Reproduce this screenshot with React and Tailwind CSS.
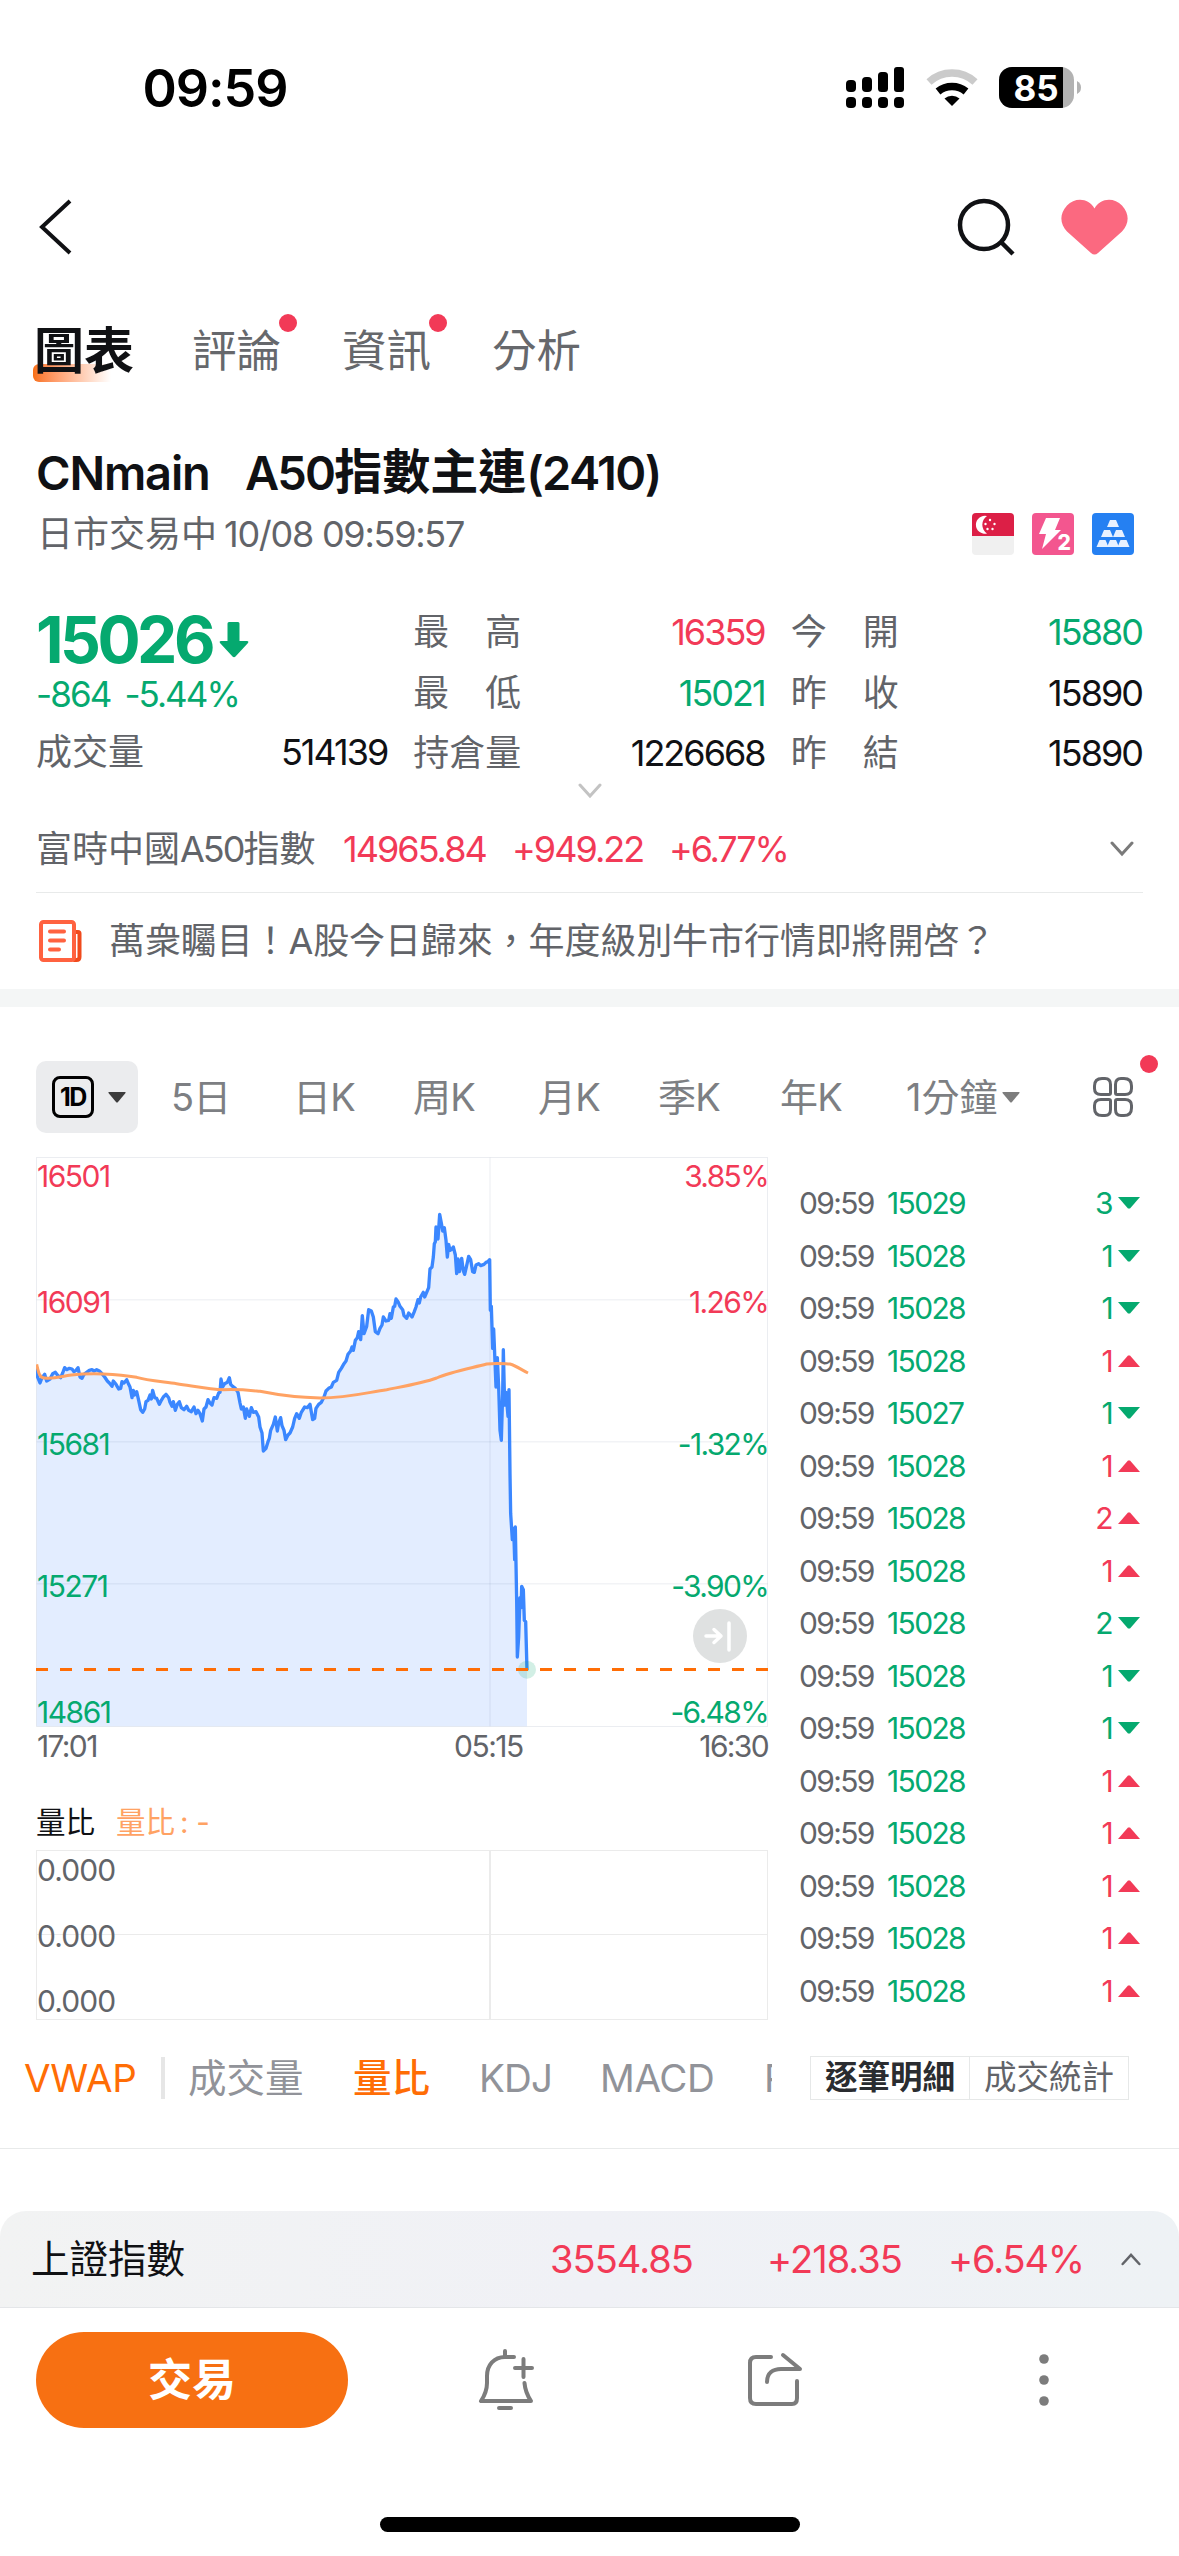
const UP = "text-[#f23a57]";
const DOWN = "text-[#05a96f]";

const tabs = [
  { label: "圖表", active: true },
  { label: "評論", dot: true },
  { label: "資訊", dot: true },
  { label: "分析" },
];

const stats = [
  [
    { label: ["最", "高"], value: "16359", color: UP },
    { label: ["最", "低"], value: "15021", color: DOWN },
    { label: ["持", "倉", "量"], value: "1226668", color: "text-[#101114]" },
  ],
  [
    { label: ["今", "開"], value: "15880", color: DOWN },
    { label: ["昨", "收"], value: "15890", color: "text-[#101114]" },
    { label: ["昨", "結"], value: "15890", color: "text-[#101114]" },
  ],
];

const periods = [
  { label: "5日", width: "w-[122px]" },
  { label: "日K", width: "w-[120px]" },
  { label: "周K", width: "w-[125px]" },
  { label: "月K", width: "w-[120px]" },
  { label: "季K", width: "w-[122px]" },
  { label: "年K", width: "w-[125px]" },
];

const yLabels = [
  { price: "16501", pct: "3.85%", color: UP, top: "top-[4px]" },
  { price: "16091", pct: "1.26%", color: UP, top: "top-[130px]" },
  { price: "15681", pct: "-1.32%", color: DOWN, top: "top-[272px]" },
  { price: "15271", pct: "-3.90%", color: DOWN, top: "top-[414px]" },
  { price: "14861", pct: "-6.48%", color: DOWN, top: "top-[540px]" },
];

const trades = [
  [15029, 3, "down"],
  [15028, 1, "down"],
  [15028, 1, "down"],
  [15028, 1, "up"],
  [15027, 1, "down"],
  [15028, 1, "up"],
  [15028, 2, "up"],
  [15028, 1, "up"],
  [15028, 2, "down"],
  [15028, 1, "down"],
  [15028, 1, "down"],
  [15028, 1, "up"],
  [15028, 1, "up"],
  [15028, 1, "up"],
  [15028, 1, "up"],
  [15028, 1, "up"],
];

// price path, 3 units per screen pixel
const priceLine =
  "20,500 22,528 30,548 36,532 44,522 50,542 60,536 68,520 76,516 84,526 92,532 98,518 104,502 110,508 118,504 126,506 132,514 138,510 144,502 150,530 156,534 162,522 170,516 178,510 186,508 192,512 200,508 208,512 216,520 224,530 232,542 238,548 246,558 250,542 258,552 266,566 272,564 276,544 282,548 290,538 296,552 300,560 306,592 310,570 314,584 320,574 326,600 332,628 338,636 344,626 348,604 354,600 360,584 364,596 368,570 374,592 380,594 388,612 394,600 400,590 408,582 416,592 420,606 426,618 430,604 436,630 442,612 448,604 454,622 462,628 470,618 476,630 484,634 492,620 498,640 504,630 510,640 517,662 522,626 528,620 534,598 540,608 546,614 552,592 560,594 566,578 570,576 573,536 578,560 584,550 592,546 598,532 602,552 608,558 616,564 624,576 630,608 634,626 640,620 646,654 650,626 658,648 664,622 670,636 678,634 686,650 690,680 696,698 700,752 708,744 714,724 718,714 722,690 730,672 736,650 742,692 746,668 752,652 756,676 762,690 767,718 774,704 780,698 788,680 794,654 800,640 808,654 814,636 824,620 832,622 840,612 848,658 854,654 858,624 866,612 874,606 882,590 888,572 896,564 904,560 910,546 920,540 926,516 934,504 942,490 948,482 954,462 962,452 966,440 970,450 976,420 982,412 986,394 992,418 997,346 1002,400 1010,378 1016,328 1024,332 1030,350 1036,394 1044,400 1050,384 1056,374 1060,350 1068,362 1076,360 1080,340 1084,354 1090,320 1094,318 1098,296 1104,304 1110,318 1118,328 1122,346 1130,354 1136,338 1146,350 1152,336 1158,320 1164,298 1168,308 1172,290 1180,276 1184,290 1190,276 1196,262 1200,206 1206,200 1210,170 1213,130 1216,124 1218,80 1224,116 1229,42 1234,68 1238,92 1243,82 1248,120 1252,170 1256,132 1260,150 1266,146 1270,140 1276,164 1280,220 1284,176 1288,214 1295,174 1300,212 1304,222 1310,196 1316,168 1322,178 1328,214 1333,216 1338,194 1346,190 1352,196 1362,192 1368,186 1374,184 1379,178 1381,330 1384,318 1388,444 1391,386 1394,460 1398,560 1402,472 1406,560 1410,690 1414,720 1418,580 1420,448 1424,614 1428,576 1434,648 1437,568 1440,820 1442,940 1447,1018 1451,984 1454,1078 1456,980 1460,1200 1462,1370 1466,1310 1470,1192 1473,1222 1475,1158 1480,1168 1483,1260 1487,1264 1491,1410";

const vwapLine =
  "M20,492 C26,520 30,534 44,533 C74,536 94,528 124,524 C160,520 190,520 220,521 C260,523 290,526 320,531 C350,540 400,544 440,550 C490,557 540,568 580,568 C630,566 660,570 690,573 C740,583 800,592 870,593 C950,593 1010,577 1070,568 C1120,558 1180,548 1220,533 C1260,515 1320,504 1370,491 C1400,487 1420,490 1440,491 C1460,497 1475,509 1494,518";

function Num({ className = "", track = "tracking-[-0.055em]", children }) {
  return <span className={`${track} ${className}`}>{children}</span>;
}

function Chevron({ className, up = false, w = 24 }) {
  return (
    <svg className={className} width={w} height="16" viewBox="0 0 24 16" fill="none" stroke="currentColor" strokeWidth="3" strokeLinecap="round">
      <path d={up ? "M2 14 12 3l10 11" : "M2 2l10 11L22 2"} />
    </svg>
  );
}

function StatusBar() {
  return (
    <div className="flex h-[176px] items-center justify-between pr-[98px] pl-[140px]">
      <span className="w-[150px] pt-[2px] text-center text-[52px] leading-none font-semibold tracking-[-0.02em] text-black">09:59</span>
      <svg width="236" height="42" viewBox="0 0 236 42">
        <g fill="#000">
          <rect x="1" y="13" width="10" height="12" rx="4" />
          <rect x="17" y="10" width="10" height="15" rx="4" />
          <rect x="33" y="5" width="10" height="20" rx="3.5" />
          <rect x="49" y="0" width="10" height="25" rx="3" />
          <rect x="1" y="30" width="10" height="11" rx="4" />
          <rect x="17" y="30" width="10" height="11" rx="4" />
          <rect x="33" y="30" width="10" height="11" rx="4" />
          <rect x="49" y="30" width="10" height="11" rx="4" />
        </g>
        <path d="M84 15a34 34 0 0 1 46 0" fill="none" stroke="#cbcbcb" strokeWidth="7.5" />
        <path d="M93 24.500a22 22 0 0 1 28 0" fill="none" stroke="#000" strokeWidth="7.500" />
        <path d="M99.500 31.500a12 12 0 0 1 15 0L107 39z" fill="#000" />
        <clipPath id="battery">
          <rect x="154" y="0" width="75" height="41" rx="13" />
        </clipPath>
        <g clipPath="url(#battery)">
          <rect x="154" width="75" height="41" fill="#b2b2b2" />
          <rect x="154" width="64" height="41" fill="#000" />
        </g>
        <path d="M232 14v13q4-2 4-6.500t-4-6.500z" fill="#b2b2b2" />
        <text x="191" y="33.500" textAnchor="middle" fill="#fff" fontSize="35" fontWeight="700" fontFamily="Inter, sans-serif">85</text>
      </svg>
    </div>
  );
}

function NavBar() {
  return (
    <div className="flex h-[102px] items-center justify-between pr-[51px] pl-[37px]">
      <svg width="36" height="56" viewBox="0 0 36 56" fill="none" stroke="#101114" strokeWidth="4">
        <path d="M33 2 5 28l28 26" />
      </svg>
      <div className="flex items-center gap-[46px]">
        <svg width="58" height="60" viewBox="0 0 58 60" fill="none" stroke="#101114" strokeWidth="4.500">
          <circle cx="27" cy="28" r="24" />
          <path d="m44 45 12 12" />
        </svg>
        <svg width="67" height="56" viewBox="0 0 67 56" fill="#fb6980">
          <path d="M33.500 9.500C28-1 14-2 6 6.500c-8 8.500-7 19 0 26L30 54q3.500 3 7 0l24-21.500c7-7 8-17.500 0-26C53-2 39-1 33.500 9.500z" />
        </svg>
      </div>
    </div>
  );
}

function Tabs() {
  return (
    <div className="flex h-[145px] items-center pl-[34px]">
      {tabs.map((t) =>
        t.active ? (
          <div key={t.label} className="relative w-[158px]">
            <span className="absolute -left-[1px] top-[41px] h-[18px] w-[78px] rounded-l-md bg-linear-to-r from-[#f77012] to-white" />
            <span className="relative text-[50px] leading-[56px] font-bold text-[#101114]">{t.label}</span>
          </div>
        ) : (
          <div key={t.label} className="relative w-[150px] text-[44.5px] leading-[56px] text-[#66686c]">
            {t.label}
            {t.dot && <span className="absolute -top-[9px] left-[87px] size-[18px] rounded-full bg-[#f23a57]" />}
          </div>
        )
      )}
    </div>
  );
}

function Badges() {
  return (
    <div className="flex gap-[18px]">
      <svg width="42" height="42" viewBox="0 0 42 42">
        <rect width="42" height="42" rx="4" fill="#f0f0f0" />
        <path d="M4 0h34a4 4 0 0 1 4 4v19H0V4a4 4 0 0 1 4-4z" fill="#dc1f46" />
        <path d="M15 3a9 9 0 1 0 0 17.500 10.500 10.500 0 0 1 0-17.500z" fill="#fff" />
        <g fill="#fff">
          <circle cx="18" cy="7" r="1.200" />
          <circle cx="13.500" cy="11" r="1.200" />
          <circle cx="22.500" cy="11" r="1.200" />
          <circle cx="15.500" cy="16" r="1.200" />
          <circle cx="20.500" cy="16" r="1.200" />
        </g>
      </svg>
      <svg width="42" height="42" viewBox="0 0 42 42">
        <rect width="42" height="42" rx="4" fill="#f3568f" />
        <path d="M14 5h14l-5 12h6L10 36l4-15H7z" fill="#fff" />
        <text x="25.500" y="37" fill="#fff" fontSize="21" fontWeight="800" fontFamily="Inter, sans-serif">2</text>
      </svg>
      <svg width="42" height="42" viewBox="0 0 42 42">
        <rect width="42" height="42" rx="4" fill="#2580f2" />
        <g fill="#e8f1ff">
          <path d="M18 7h6l3 7H15z" />
          <path d="M12 17h6l3 7H9z" />
          <path d="M24 17h6l3 7H21z" />
          <path d="M7.500 27h6l3 7H4.500z" />
          <path d="M18 27h6l3 7H15z" />
          <path d="M28.500 27h6l3 7H25.500z" />
        </g>
      </svg>
    </div>
  );
}

function Header() {
  return (
    <div className="px-9">
      <div className="flex h-[60px] items-center text-[48px] leading-none font-semibold text-[#101114]">
        <Num className="w-[209px] text-[47px]" track="tracking-[-0.025em]">CNmain</Num>
        <Num className="text-[47px]" track="tracking-[-0.04em]">A50</Num>
        <span className="font-bold">指數主連</span>
        <Num className="text-[47px]" track="tracking-[-0.035em]">(2410)</Num>
      </div>
      <div className="flex h-[64px] items-center justify-between pr-[9px] text-[36px] leading-none text-[#626469]">
        <span className="pl-[1px]">
          日市交易中<Num className="ml-[7px]" track="tracking-[-0.035em]">10/08 09:59:57</Num>
        </span>
        <Badges />
      </div>
    </div>
  );
}

function Quote() {
  return (
    <div className="grid h-[182px] grid-cols-3 gap-x-[26px] pr-[37px] pl-9 text-[36px] leading-none">
      <div className="flex flex-col">
        <div className={`flex h-[72px] items-center gap-[7px] pt-[3px] ${DOWN}`}>
          <Num className="text-[64px] font-bold">15026</Num>
          <svg width="30" height="36" viewBox="0 0 30 36" fill="currentColor">
            <path d="M10 0h9q1.500 0 1.500 1.500V19H28q2 0 1 2L16.500 34.500q-1.500 1.500-3 0L1 21q-1-2 1-2h6.500V1.500Q8.500 0 10 0z" />
          </svg>
        </div>
        <div className={`flex h-[41px] items-center gap-[14px] text-[35px] ${DOWN}`}>
          <Num>-864</Num>
          <Num>-5.44%</Num>
        </div>
        <div className="flex h-[68px] items-center justify-between pt-[5px]">
          <span className="text-[#626469]">成交量</span>
          <Num className="text-[#101114]">514139</Num>
        </div>
      </div>
      {stats.map((col, i) => (
        <div key={i} className="flex flex-col">
          {col.map((s) => (
            <div key={s.label.join("")} className="flex h-[60.400px] items-center justify-between">
              <span className="flex w-[108px] justify-between text-[#626469]">
                {s.label.map((c) => (
                  <span key={c}>{c}</span>
                ))}
              </span>
              <Num className={s.color}>{s.value}</Num>
            </div>
          ))}
        </div>
      ))}
    </div>
  );
}

function NewsIcon() {
  return (
    <svg width="43" height="42" viewBox="0 0 43 42" fill="none" stroke="#ff6240" strokeWidth="4" strokeLinejoin="round" strokeLinecap="round">
      <path d="M35 12h4q1.500 0 1.500 1.500V37q0 3-3 3h-2.500" stroke="#f04a1c" />
      <rect x="2" y="2" width="33" height="38" rx="2.500" />
      <path d="M11 11.500h14M11 20.500h14M11 29.500h9" />
    </svg>
  );
}

function PeriodBar() {
  return (
    <div className="flex h-[72px] items-center pl-9 text-[38px] leading-none text-[#7d7f83]">
      <div className="flex h-[72px] w-[102px] items-center gap-[14px] rounded-[10px] bg-[#ebecee] pl-4">
        <span className="flex size-[42px] items-center justify-center rounded-[8px] border-[3px] border-black text-[25px] font-bold tracking-[-0.06em] text-black">1D</span>
        <svg width="18" height="11" viewBox="0 0 18 11" fill="#3c3c3c">
          <path d="M1 0h16q1 0 .5 1L10 10q-1 1-2 0L.5 1Q0 0 1 0z" />
        </svg>
      </div>
      <div className="flex pl-[33px]">
        {periods.map((p) => (
          <span key={p.label} className={`${p.width} tracking-[-0.02em]`}>{p.label}</span>
        ))}
      </div>
      <span className="flex w-[180px] items-center pl-[1px]">
        1分鐘
        <svg className="ml-[5px]" width="18" height="11" viewBox="0 0 18 11" fill="#7d7d7d">
          <path d="M1 0h16q1 0 .5 1L10 10q-1 1-2 0L.5 1Q0 0 1 0z" />
        </svg>
      </span>
      <div className="relative ml-[8px]">
        <svg width="40" height="40" viewBox="0 0 40 40" fill="none" stroke="#626469" strokeWidth="3">
          <path d="M9 1.500h3q5.500 0 5.500 6V16q0 1.500-1.500 1.500H8q-6.500 0-6.500-6V9q0-7.500 7.500-7.500z" />
          <path d="M31 1.500h-3q-5.500 0-5.500 6V16q0 1.500 1.500 1.500h8q6.500 0 6.500-6V9q0-7.500-7.500-7.500z" />
          <path d="M9 38.500h3q5.500 0 5.500-6V24q0-1.500-1.500-1.500H8q-6.500 0-6.500 6V31q0 7.500 7.500 7.500z" />
          <path d="M31 38.500h-3q-5.500 0-5.500-6V24q0-1.500 1.500-1.500h8q6.500 0 6.500 6V31q0 7.500-7.500 7.500z" />
        </svg>
        <span className="absolute -top-[22px] left-[47px] size-[18px] rounded-full bg-[#f23a57]" />
      </div>
    </div>
  );
}

function PriceChart() {
  return (
    <div className="relative h-[570px] w-[732px] text-[30px] leading-[30px]">
      <svg className="block" width="732" height="570" viewBox="18 -130 2196 1710" fill="none">
        <path d={`M${priceLine} V1578 H20z`} fill="#e3edff" />
        <g stroke="#1f3a5f" strokeOpacity="0.090" strokeWidth="3">
          <rect x="19.500" y="-128.500" width="2193" height="1707" />
          <path d="M20 298.500H2213M20 724.500H2213M20 1150.500H2213M1380 -128V1578" />
        </g>
        <polyline points={priceLine} stroke="#3b87ff" strokeWidth="10" strokeLinejoin="round" />
        <path d={vwapLine} stroke="#ffa263" strokeWidth="9" />
        <circle cx="1491" cy="1408" r="27" fill="#05a96f" fillOpacity="0.180" />
        <path d="M18 1407.500H2214" stroke="#ff6d05" strokeWidth="9" strokeDasharray="36 36" />
      </svg>
      {yLabels.map((l) => (
        <div key={l.price} className={`absolute right-0 left-[1px] flex justify-between ${l.top} ${l.color}`}>
          <Num track="tracking-[-0.05em]">{l.price}</Num>
          <Num>{l.pct}</Num>
        </div>
      ))}
      <svg className="absolute top-[452px] left-[657px]" width="54" height="54" viewBox="0 0 54 54" fill="none" stroke="#fff" strokeWidth="3.500" strokeLinecap="round" strokeLinejoin="round">
        <circle cx="27" cy="27" r="27" fill="#dfe1e1" stroke="none" />
        <path d="M13 27h14M21 20.500l7 6.500-7 6.500M36 14v27" />
      </svg>
    </div>
  );
}

function RatioChart() {
  return (
    <div className="relative flex h-[170px] w-[732px] border border-[#ebebeb] text-[30px] leading-[30px] text-[#626469]">
      <div className="w-[454px] border-r-2 border-[#ebebeb]">
        <div className="h-[84px] border-b border-[#ebebeb]" />
      </div>
      <div className="flex-1">
        <div className="h-[84px] border-b border-[#ebebeb]" />
      </div>
      <div className="absolute top-[4px] bottom-[3px] left-0 flex flex-col justify-between">
        <Num track="tracking-[-0.03em]">0.000</Num>
        <Num track="tracking-[-0.03em]">0.000</Num>
        <Num track="tracking-[-0.03em]">0.000</Num>
      </div>
    </div>
  );
}

function TradeList() {
  return (
    <div className="ml-[31px] w-[341px] pt-[20px] text-[30px] leading-none">
      {trades.map(([price, size, dir], i) => (
        <div key={i} className="flex h-[52.500px] items-center">
          <Num className="w-[88px] text-[#626469]" track="tracking-[-0.055em]">09:59</Num>
          <Num className={DOWN}>{price}</Num>
          <span className={`ml-auto flex items-center gap-[6px] ${dir === "up" ? UP : DOWN}`}>
            <Num>{size}</Num>
            <svg width="22" height="12" viewBox="0 0 22 12" fill="currentColor">
              <path d={dir === "up" ? "M0 12 10 .5h2L22 12z" : "M0 0 10 11.500h2L22 0z"} />
            </svg>
          </span>
        </div>
      ))}
    </div>
  );
}

function IndicatorBar() {
  return (
    <div className="flex h-[62px] items-center text-[38.5px] leading-[60px] text-[#919399]">
      <div className="flex w-[772px] items-center pl-[24px] whitespace-nowrap">
        <span className="w-[137px] tracking-[-0.005em] text-[#ff6d05]">VWAP</span>
        <span className="h-[42px] w-[4px] bg-[#e6e6e6]" />
        <span className="ml-[23px] w-[165px]">成交量</span>
        <span className="w-[126px] font-medium text-[#ff6d05]">量比</span>
        <span className="w-[121px] tracking-[-0.02em]">KDJ</span>
        <span className="w-[164px] tracking-[-0.01em]">MACD</span>
        {/* next indicator is only partly scrolled into view */}
        <span className="w-[8px] overflow-hidden">RSI</span>
      </div>
      <div className="ml-[38px] flex h-[44px] border border-[#e6e8e8] text-[32.500px] leading-[40px]">
        <span className="flex w-[159px] items-center justify-center border-r border-[#e6e8e8] font-bold text-[#2a2c30]">逐筆明細</span>
        <span className="flex w-[158px] items-center justify-center text-[#626469]">成交統計</span>
      </div>
    </div>
  );
}

function BottomIcons() {
  return (
    <div className="flex flex-1 items-center">
      <svg className="ml-[130px]" width="56" height="62" viewBox="0 0 56 62" fill="none" stroke="#7c7c7c" strokeWidth="4" strokeLinecap="round" strokeLinejoin="round">
        <path d="M27 2v5M36 8h-9C16 8 9 16 9 27v7c0 7-2 12-6 18h50c-4-6-6-12-6.500-18M45.500 10v18M37 19h17M21 59h12" />
      </svg>
      <svg className="ml-[213px]" width="56" height="56" viewBox="0 0 56 56" fill="none" stroke="#7c7c7c" strokeWidth="4" strokeLinecap="round" strokeLinejoin="round">
        <path d="M24 5H9Q3 5 3 11v35q0 6 6 6h36q5 0 5-6V29" />
        <path d="M20 30C20 21 26 17 34 17h19L36 3" />
      </svg>
      <svg className="ml-[236px]" width="10" height="54" viewBox="0 0 10 54" fill="#7c7c7c">
        <circle cx="5" cy="6" r="4.800" />
        <circle cx="5" cy="27" r="4.800" />
        <circle cx="5" cy="48" r="4.800" />
      </svg>
    </div>
  );
}

export default function App() {
  return (
    <div className="h-[2556px] w-[1179px] overflow-hidden bg-white font-['Inter','Noto_Sans_CJK_TC',sans-serif]">
      <StatusBar />
      <NavBar />
      <Tabs />
      <div className="h-[19px]" />
      <Header />
      <div className="h-[36px]" />
      <Quote />
      <div className="flex h-[14px] items-center justify-center">
        <Chevron className="text-[#c3c3c3]" />
      </div>
      <div className="flex h-[94px] items-center pt-[8px] pr-[45px] pl-9 text-[36px] leading-none text-[#626469]">
        <span className="w-[307px]">
          富時中國<Num>A50</Num>指數
        </span>
        <Num className={`w-[169px] ${UP}`}>14965.84</Num>
        <Num className={`w-[157px] ${UP}`}>+949.22</Num>
        <Num className={UP} track="tracking-[-0.06em]">+6.77%</Num>
        <Chevron className="ml-auto text-[#7a7a7a]" />
      </div>
      <div className="mx-9 flex h-[97px] items-center gap-[27px] border-t border-[#e8eaea] pl-[3px] text-[36px] leading-none text-[#626469]">
        <NewsIcon />
        <span className="tracking-[-0.003em] whitespace-nowrap">萬衆矚目！A股今日歸來，年度級別牛市行情即將開啓？</span>
      </div>
      <div className="h-[18px] bg-[#f4f6f6]" />
      <div className="h-[54px]" />
      <PeriodBar />
      <div className="flex pt-[24px] pl-9">
        <div>
          <PriceChart />
          <div className="flex h-[38px] items-center text-[30px] leading-none text-[#626469]">
            <Num className="w-[418px] pl-[1px]">17:01</Num>
            <Num track="tracking-[-0.05em]">05:15</Num>
            <Num className="ml-auto">16:30</Num>
          </div>
          <div className="flex h-[85px] items-end gap-[21px] pb-[11px] text-[29.500px] leading-[34px] text-[#101114]">
            <span>量比</span>
            <span className="text-[#ffa263]">
              量比<Num className="ml-[5px]" track="tracking-[-0.01em]">: -</Num>
            </span>
          </div>
          <RatioChart />
        </div>
        <TradeList />
      </div>
      <div className="h-[27px]" />
      <IndicatorBar />
      <div className="h-[40px] border-b border-[#e8eaea]" />
      <div className="h-[62px]" />
      <div className="flex h-[97px] items-center rounded-t-[26px] border-b border-[#e4e6e9] bg-linear-to-r from-[#f2f3f3] via-[#f0f1f6] to-[#eef2f5] pr-[38px] pl-[31px] text-[38px] leading-none">
        <span className="w-[519px] text-[38.500px] text-[#101114]">上證指數</span>
        <Num className={`w-[217px] ${UP}`} track="tracking-[-0.025em]">3554.85</Num>
        <Num className={`w-[181px] ${UP}`} track="tracking-[-0.025em]">+218.35</Num>
        <Num className={UP} track="tracking-[-0.03em]">+6.54%</Num>
        <Chevron className="ml-auto text-[#626469]" up w={20} />
      </div>
      <div className="flex h-[144px] items-center pl-9">
        <button className="h-[96px] w-[312px] rounded-full bg-[#f77012] text-[44px] font-bold text-white">交易</button>
        <BottomIcons />
      </div>
      <div className="mx-auto mt-[65px] h-[15px] w-[420px] rounded-full bg-black" />
    </div>
  );
}
